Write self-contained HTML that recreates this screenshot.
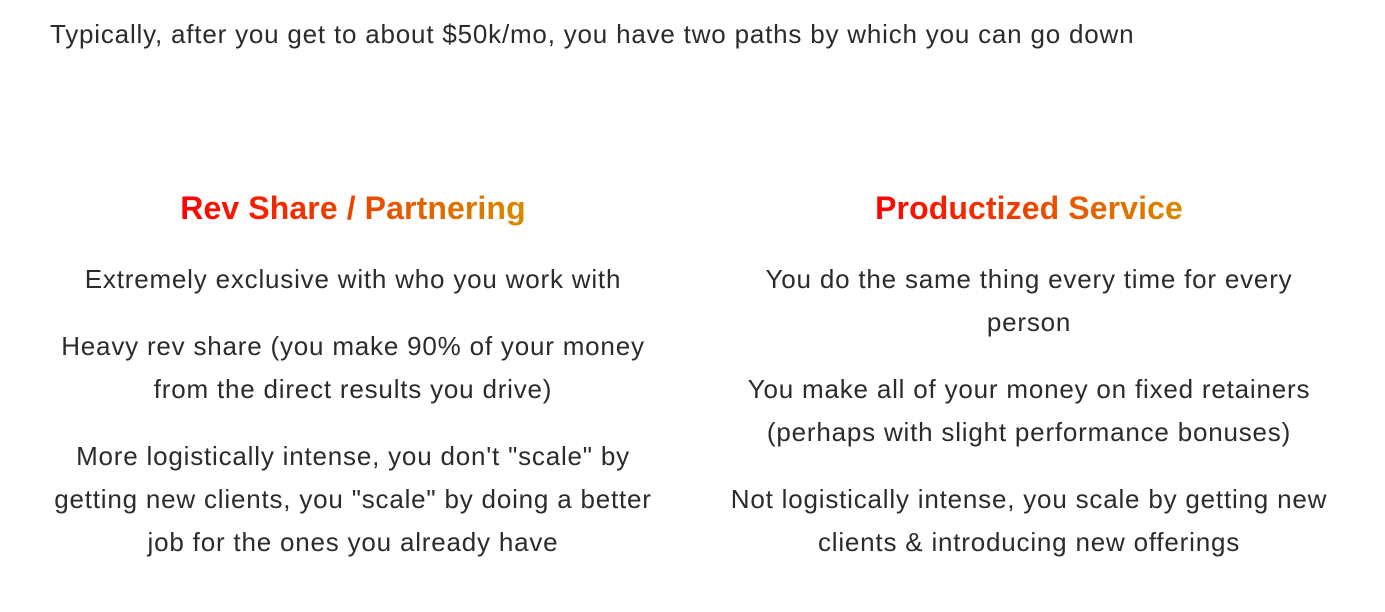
<!DOCTYPE html>
<html><head><meta charset="utf-8"><style>
html,body{margin:0;padding:0;background:#fff;width:1385px;height:612px;overflow:hidden}
body{font-family:"Liberation Sans",sans-serif;color:#2b2b2b}
.top{position:absolute;left:50px;top:17px;font-size:26px;line-height:34px;letter-spacing:0.8px}
.col{position:absolute;top:186px;width:680px;text-align:center}
.c1{left:13px}.c2{left:689px}
h2{margin:0 0 28px;font-size:32px;line-height:44px;font-weight:bold;letter-spacing:0.1px}
h2 span{background:linear-gradient(90deg,#ff0000,#d98a00);-webkit-background-clip:text;background-clip:text;color:transparent}
p{margin:0 0 24px;font-size:26px;line-height:43px;letter-spacing:0.8px}
</style></head><body>
<div class="top">Typically, after you get to about $50k/mo, you have two paths by which you can go down</div>
<div class="col c1">
<h2><span>Rev Share / Partnering</span></h2>
<p>Extremely exclusive with who you work with</p>
<p>Heavy rev share (you make 90% of your money<br>from the direct results you drive)</p>
<p>More logistically intense, you don't "scale" by<br>getting new clients, you "scale" by doing a better<br>job for the ones you already have</p>
</div>
<div class="col c2">
<h2><span>Productized Service</span></h2>
<p>You do the same thing every time for every<br>person</p>
<p>You make all of your money on fixed retainers<br>(perhaps with slight performance bonuses)</p>
<p>Not logistically intense, you scale by getting new<br>clients &amp; introducing new offerings</p>
</div>
</body></html>
